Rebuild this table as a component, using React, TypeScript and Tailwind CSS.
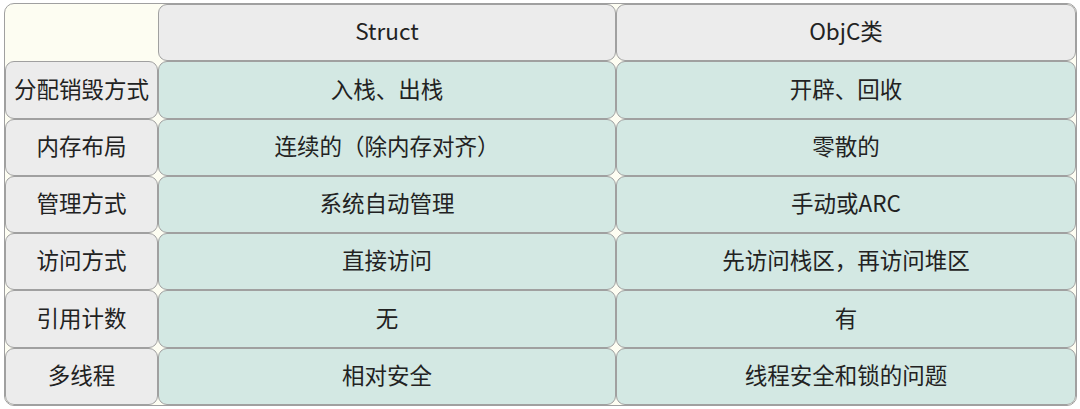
const rows: [string, string, string][] = [
  ['分配销毁方式', '入栈、出栈', '开辟、回收'],
  ['内存布局', '连续的（除内存对齐）', '零散的'],
  ['管理方式', '系统自动管理', '手动或ARC'],
  ['访问方式', '直接访问', '先访问栈区，再访问堆区'],
  ['引用计数', '无', '有'],
  ['多线程', '相对安全', '线程安全和锁的问题'],
];

const cell = 'flex items-center justify-center pb-[3px] border border-[#a0a0a0] rounded-[9px]';

export default function App() {
  return (
    <div className="w-[1080px] h-[409px] bg-white pt-[3px] pl-[4px]" style={{ fontFamily: '"Noto Sans CJK SC", sans-serif' }}>
      <div className="w-[1073px] h-[403px] bg-[#fdfdf2] border border-[#a0a0a0] rounded-[10px] grid grid-cols-[153px_458px_1fr] grid-rows-7 text-[22.5px] text-[#222] overflow-hidden">
        <div />
        <div className={`${cell} bg-[#ececec]`}>Struct</div>
        <div className={`${cell} bg-[#ececec]`}>ObjC类</div>
        {rows.map(([label, a, b]) => (
          <>
            <div key={label} className={`${cell} bg-[#ececec]`}>{label}</div>
            <div key={label + 'a'} className={`${cell} bg-[#d3e8e3]`}>{a}</div>
            <div key={label + 'b'} className={`${cell} bg-[#d3e8e3]`}>{b}</div>
          </>
        ))}
      </div>
    </div>
  );
}
